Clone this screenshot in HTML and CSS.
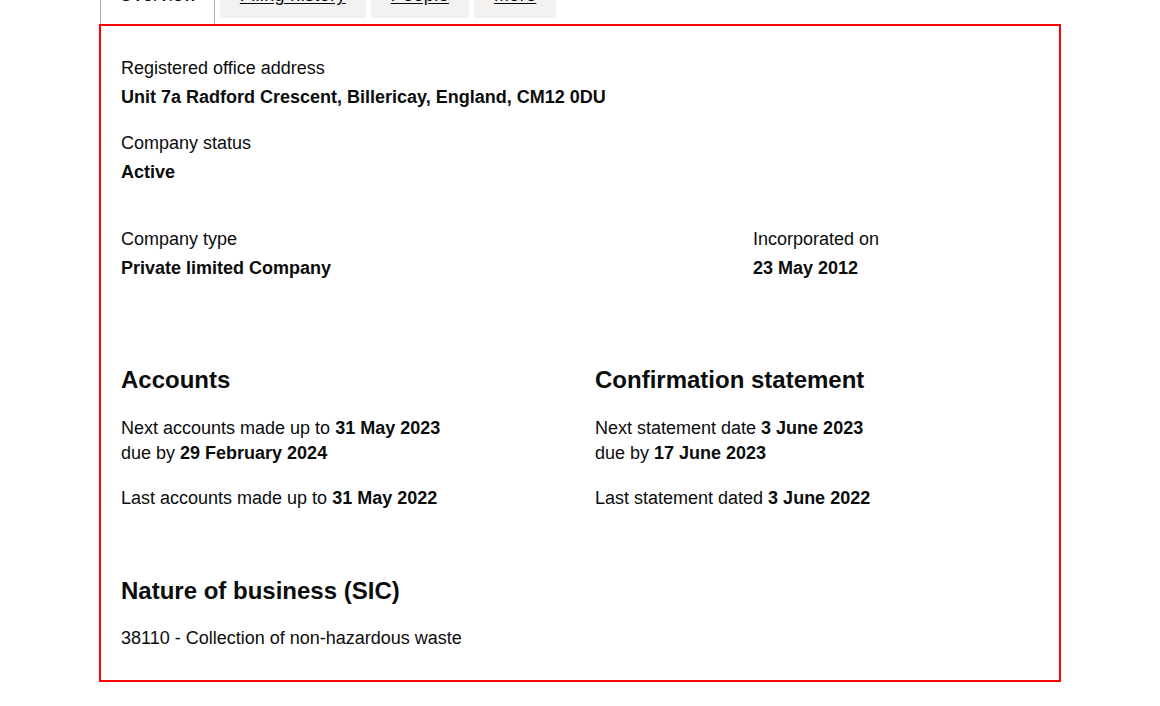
FILE: index.html
```html
<!DOCTYPE html>
<html lang="en">
<head>
<meta charset="utf-8">
<title>Overview</title>
<link rel="stylesheet" href="styles.css">
</head>
<body>
<div class="tabs">
  <ul class="tab-list">
    <li class="tab tab-selected"><a href="#">Overview</a></li>
    <li class="tab"><a href="#">Filing history</a></li>
    <li class="tab"><a href="#">People</a></li>
    <li class="tab"><a href="#">More</a></li>
  </ul>
  <div class="panel">
    <dl class="field">
      <dt class="label">Registered office address</dt>
      <dd class="value">Unit 7a Radford Crescent, Billericay, England, CM12 0DU</dd>
    </dl>
    <dl class="field">
      <dt class="label">Company status</dt>
      <dd class="value">Active</dd>
    </dl>
    <div class="row row-type">
      <dl class="field col-two-thirds">
        <dt class="label">Company type</dt>
        <dd class="value">Private limited Company</dd>
      </dl>
      <dl class="field col-one-third">
        <dt class="label">Incorporated on</dt>
        <dd class="value">23 May 2012</dd>
      </dl>
    </div>
    <div class="row row-dates">
      <div class="col-half">
        <h2 class="heading">Accounts</h2>
        <p class="para">Next accounts made up to <strong>31 May 2023</strong><br>due by <strong>29 February 2024</strong></p>
        <p class="para">Last accounts made up to <strong>31 May 2022</strong></p>
      </div>
      <div class="col-half">
        <h2 class="heading">Confirmation statement</h2>
        <p class="para">Next statement date <strong>3 June 2023</strong><br>due by <strong>17 June 2023</strong></p>
        <p class="para">Last statement dated <strong>3 June 2022</strong></p>
      </div>
    </div>
    <div class="sic">
      <h2 class="heading heading-sic">Nature of business (SIC)</h2>
      <ul class="sic-list">
        <li class="para">38110 - Collection of non-hazardous waste</li>
      </ul>
    </div>
  </div>
</div>
</body>
</html>
```

FILE: styles.css
```css
html, body {
  margin: 0;
  padding: 0;
  background: #ffffff;
}

body {
  font-family: "Liberation Sans", Arial, sans-serif;
  font-size: 18px;
  line-height: 25px;
  color: #0b0c0c;
  overflow: hidden;
}

.tabs {
  margin-left: 99px;
  width: 962px;
}

.tab-list {
  list-style: none;
  margin: -32px 0 0 1px;
  padding: 0;
  display: flex;
  align-items: flex-start;
}

.tab {
  margin: 5px 5px 0 0;
  padding: 10px 20px;
  background: #f3f2f1;
  white-space: nowrap;
  letter-spacing: 0.35px;
}

.tab a {
  color: #0b0c0c;
  text-decoration: underline;
  text-underline-offset: 2px;
}

.tab-selected {
  margin-top: 0;
  padding: 14px 17px 16px 18px;
  background: #ffffff;
  border: 1px solid #b1b4b6;
  border-bottom: 0;
}

.tab-selected a {
  text-decoration: none;
}

.panel {
  border: 2px solid #ff0000;
  padding: 30px 20px 29px;
  box-sizing: border-box;
  width: 962px;
}

.field {
  margin: 0 0 21px;
}

.label {
  margin: 0;
}

.value {
  margin: 4px 0 0;
  font-weight: 700;
}

.row {
  display: flex;
  margin: 0 -15px;
}

.row-type {
  margin-top: 42px;
}

.row-type .field {
  margin-bottom: 0;
}

.col-two-thirds {
  width: 66.6667%;
  padding: 0 15px;
  box-sizing: border-box;
}

.col-one-third {
  width: 33.3333%;
  padding: 0 15px;
  box-sizing: border-box;
}

.row-dates {
  margin-top: 84px;
}

.col-half {
  width: 50%;
  padding: 0 15px;
  box-sizing: border-box;
}

.heading {
  margin: 0 0 21px;
  font-family: "Liberation Sans", Arial, sans-serif;
  font-size: 24px;
  line-height: 30px;
  font-weight: 700;
}

.para {
  margin: 0 0 20px;
}

.col-half .para:last-child {
  margin-bottom: 0;
}

.sic {
  margin-top: 65px;
}

.heading-sic {
  margin-bottom: 20px;
}

.sic-list {
  list-style: none;
  margin: 0;
  padding: 0;
}

.sic-list .para {
  margin: 0;
}
```
